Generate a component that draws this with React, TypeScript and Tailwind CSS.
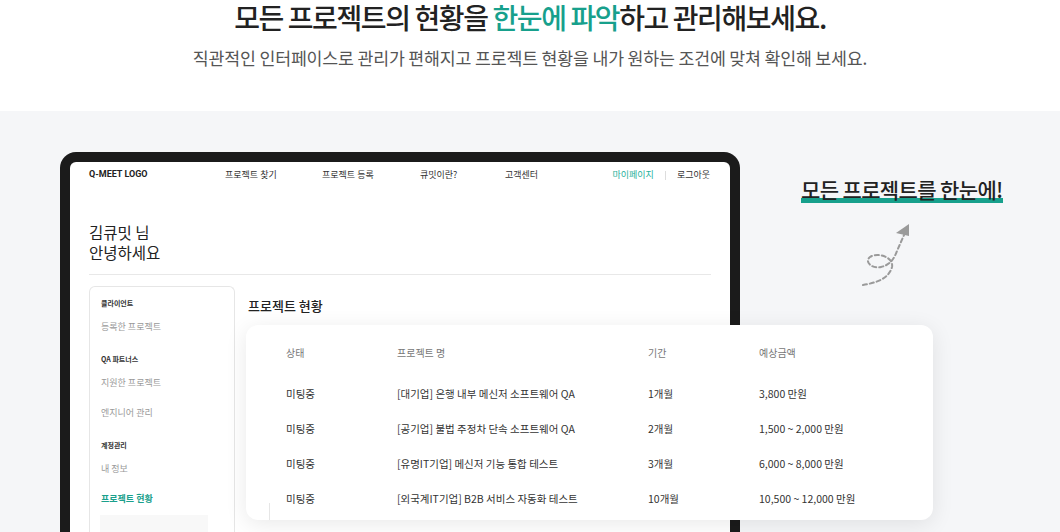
import React from 'react';

const projects = [
    { status: '미팅중', name: '[대기업] 은행 내부 메신저 소프트웨어 QA', period: '1개월', price: '3,800 만원' },
    { status: '미팅중', name: '[공기업] 불법 주정차 단속 소프트웨어 QA', period: '2개월', price: '1,500 ~ 2,000 만원' },
    { status: '미팅중', name: '[유명IT기업] 메신저 기능 통합 테스트', period: '3개월', price: '6,000 ~ 8,000 만원' },
    { status: '미팅중', name: '[외국계IT기업] B2B 서비스 자동화 테스트', period: '10개월', price: '10,500 ~ 12,000 만원' },
];

function Arrow() {
    return (
        <svg width="56" height="70" viewBox="0 0 56 70" fill="none">
            <path
                d="M4 64 C16 62, 30 58, 33 46 C35 36, 18 31, 11 36 C5 41, 13 48, 22 46 C31 44, 35 38, 38 30 L45 14"
                stroke="#9a9a9a"
                strokeWidth="2"
                strokeDasharray="4 3"
                strokeLinecap="round"
            />
            <polygon points="50,3 37,12 50,15" fill="#9a9a9a" />
        </svg>
    );
}

function Sidebar() {
    return (
        <div className="w-[146px] shrink-0 rounded-t-[6px] border border-b-0 border-[#e6e6e6] pt-[8px] px-[11px]">
            <div className="h-[16px] flex items-center text-[7px] font-bold text-[#333]">클라이언트</div>
            <div className="h-[32px] flex items-center text-[9px] text-[#999]">등록한 프로젝트</div>
            <div className="h-[32px] flex items-center text-[7px] font-bold text-[#333]">QA 파트너스</div>
            <div className="h-[16px] flex items-center text-[9px] text-[#999]">지원한 프로젝트</div>
            <div className="h-[44px] flex items-center text-[9px] text-[#999]">엔지니어 관리</div>
            <div className="h-[20px] flex items-center text-[7px] font-bold text-[#333]">계정관리</div>
            <div className="h-[28px] flex items-center text-[9px] text-[#999]">내 정보</div>
            <div className="h-[32px] flex items-center text-[9px] font-bold text-[#1aa08c]">프로젝트 현황</div>
            <div className="ml-[-1px] w-[108px] h-[20px] bg-[#f8f8f8]" />
        </div>
    );
}

function Screen() {
    return (
        <div className="bg-[#1b1b1b] rounded-t-[16px] w-[680px] h-[380px] pt-[10px] px-[10px]">
            <div className="bg-white rounded-t-[6px] h-full">
                {/* nav */}
                <div className="h-[26px] flex items-center pl-[19px] pr-[20px] text-[9px] text-[#333]">
                    <div className="w-[136px] font-bold text-[9px] font-['Roboto','Noto_Sans_CJK_KR',sans-serif] text-[#222]">Q-MEET LOGO</div>
                    <div className="w-[97px]">프로젝트 찾기</div>
                    <div className="w-[98px]">프로젝트 등록</div>
                    <div className="w-[85px]">큐밋이란?</div>
                    <div>고객센터</div>
                    <div className="ml-auto flex items-center">
                        <span className="text-[#1fb09b]">마이페이지</span>
                        <span className="mx-[11px] w-px h-[9px] bg-[#dddddd]" />
                        <span>로그아웃</span>
                    </div>
                </div>

                <div className="px-[19px] pt-[34px]">
                    <div className="text-[15.5px] leading-[20px] text-[#222]">
                        <div>김큐밋 님</div>
                        <div>안녕하세요</div>
                    </div>
                    <div className="mt-[12px] border-t border-[#e8e8e8]" />
                    <div className="mt-[11px] flex">
                        <Sidebar />
                        <div className="ml-[13px] flex-1">
                            <div className="mt-[10px] h-[20px] flex items-center text-[13px] font-medium text-[#222]">프로젝트 현황</div>
                        </div>
                    </div>
                </div>
            </div>
        </div>
    );
}

function ProjectTable() {
    return (
        <div className="absolute left-[246px] top-[214px] w-[687px] h-[195px] bg-white rounded-[12px] shadow-[0_4px_22px_rgba(0,0,0,0.09)] pl-[40px]">
            <div className="mt-[3px] h-[48px] flex items-center text-[10px] text-[#777]">
                <div className="w-[111px]">상태</div>
                <div className="w-[251px]">프로젝트 명</div>
                <div className="w-[111px]">기간</div>
                <div>예상금액</div>
            </div>
            <div>
                {projects.map((p, i) => (
                    <div key={i} className="h-[35px] flex items-center text-[10.5px] text-[#333]">
                        <div className="w-[111px]">{p.status}</div>
                        <div className="w-[251px]">{p.name}</div>
                        <div className="w-[111px]">{p.period}</div>
                        <div>{p.price}</div>
                    </div>
                ))}
            </div>
            <div className="absolute left-[23px] top-[178px] w-px h-[17px] bg-[#e6e6e6]" />
        </div>
    );
}

export default function App() {
    return (
        <div className="w-[1060px] h-[532px] overflow-hidden bg-[#f5f6f8] font-['Noto_Sans_CJK_KR','Noto_Sans',sans-serif]">
            <div className="h-[111px] bg-white flex flex-col items-center">
                <h1 className="text-[28px] leading-[34px] font-medium text-[#222] tracking-[-0.05em]">
                    모든 프로젝트의 현황을 <span className="text-[#17a08c]">한눈에 파악</span>하고 관리해보세요.
                </h1>
                <p className="mt-[11px] text-[17.3px] leading-[26px] text-[#555] tracking-[-0.01em]">
                    직관적인 인터페이스로 관리가 편해지고 프로젝트 현황을 내가 원하는 조건에 맞쳐 확인해 보세요.
                </p>
            </div>

            <div className="relative flex pt-[41px] pl-[60px]">
                <Screen />
                <div className="ml-[61px] pt-[23px]">
                    <div className="inline-block text-[21px] leading-[28px] font-medium text-[#222] tracking-[-0.03em] shadow-[inset_0_-5px_0_#17a08c]">
                        모든 프로젝트를 한눈에!
                    </div>
                    <div className="ml-[58px] mt-[18px]">
                        <Arrow />
                    </div>
                </div>
                <ProjectTable />
            </div>
        </div>
    );
}
